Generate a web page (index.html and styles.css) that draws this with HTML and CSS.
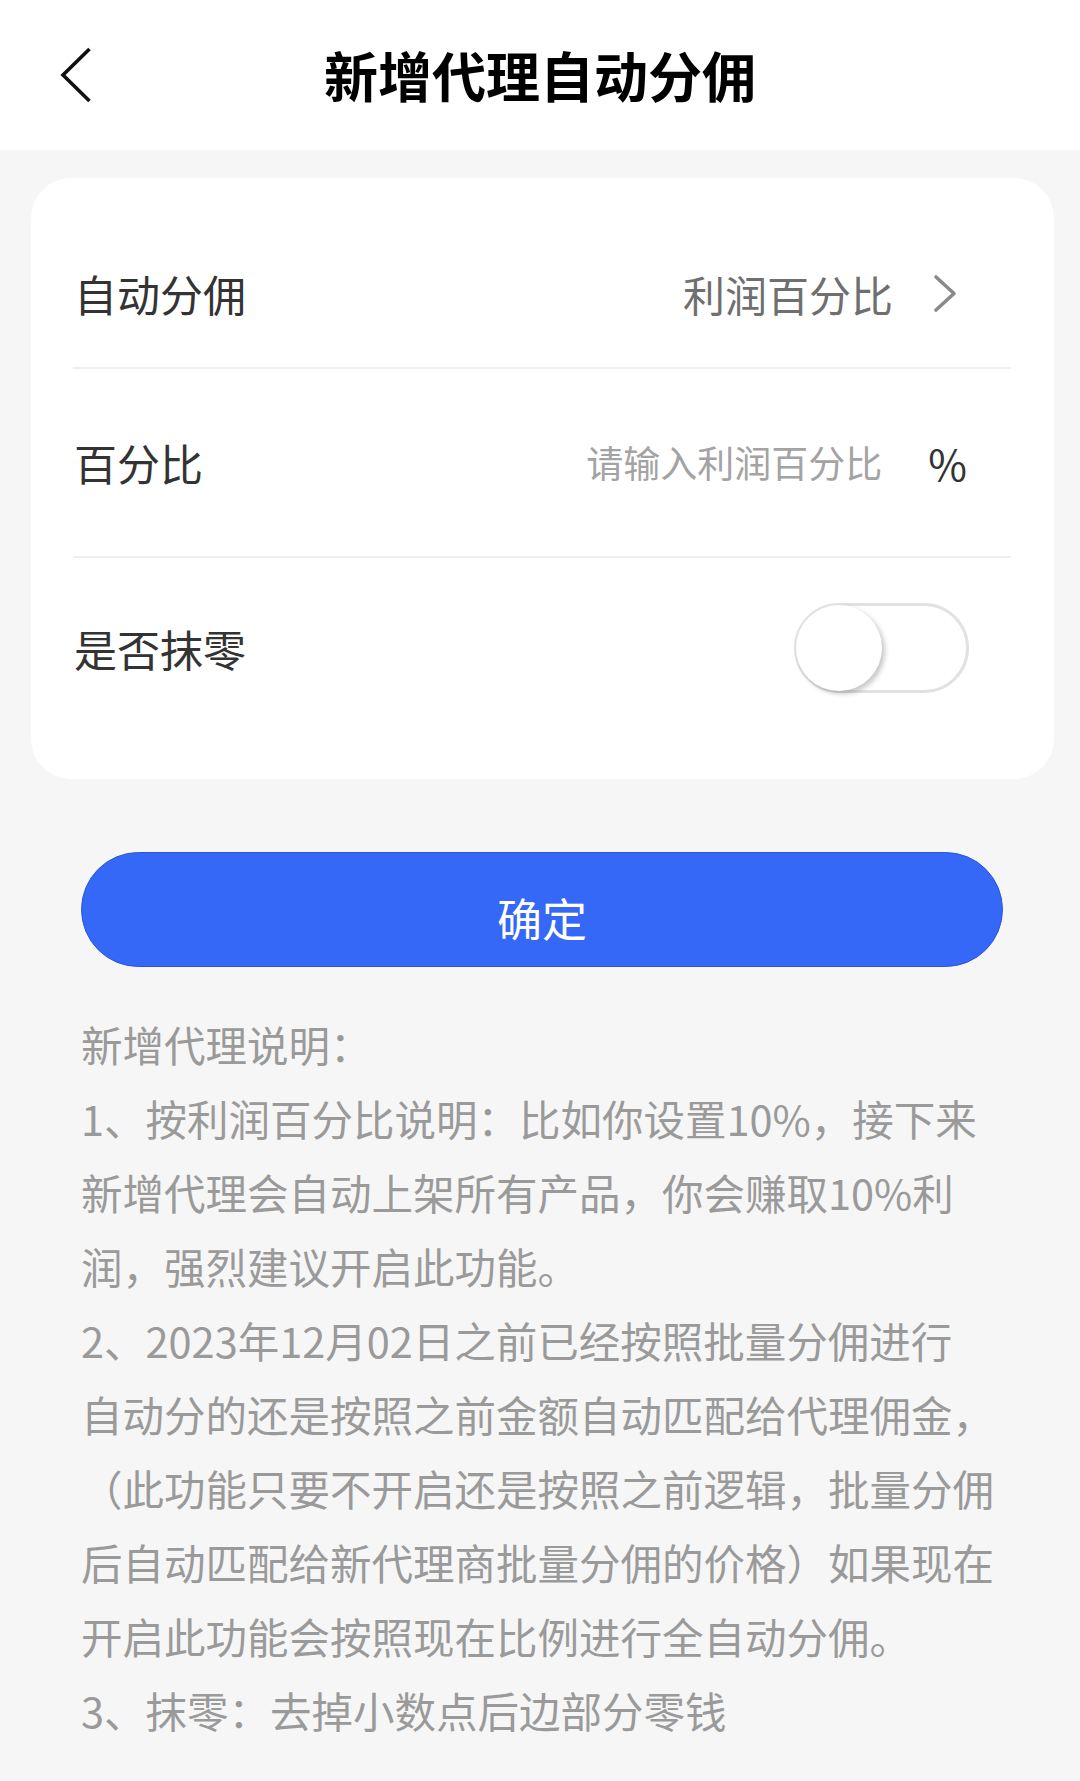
FILE: index.html
```html
<!DOCTYPE html>
<html lang="zh-CN">
<head>
<meta charset="utf-8">
<title>新增代理自动分佣</title>
<link rel="stylesheet" href="styles.css">
</head>
<body>
<div class="page">
  <header class="topbar">
    <div class="topbar-left">
      <svg class="back-icon" width="40" height="60" viewBox="0 0 40 60">
        <polyline points="33.5,4 7,30 33.5,56" fill="none" stroke="#111" stroke-width="3.6" stroke-linejoin="miter"/>
      </svg>
    </div>
    <h1 class="topbar-title">新增代理自动分佣</h1>
    <div class="topbar-right"></div>
  </header>

  <section class="card">
    <div class="row row-first">
      <span class="row-label">自动分佣</span>
      <div class="row-value">
        <span class="value-text">利润百分比</span>
        <svg class="chevron" width="26" height="40" viewBox="0 0 26 40">
          <polyline points="3,3 21,19.5 3,36" fill="none" stroke="#8a8a8a" stroke-width="3.6" stroke-linecap="round" stroke-linejoin="round"/>
        </svg>
      </div>
    </div>
    <div class="row row-second">
      <span class="row-label">百分比</span>
      <div class="row-value">
        <span class="placeholder">请输入利润百分比</span>
        <span class="unit">%</span>
      </div>
    </div>
    <div class="row row-third">
      <span class="row-label">是否抹零</span>
      <div class="switch">
        <span class="switch-knob"></span>
      </div>
    </div>
  </section>

  <button class="confirm-btn">确定</button>

  <div class="notes">
    新增代理说明：<br>
    1、按利润百分比说明：比如你设置10%，接下来<br>
    新增代理会自动上架所有产品，你会赚取10%利<br>
    润，强烈建议开启此功能。<br>
    2、2023年12月02日之前已经按照批量分佣进行<br>
    自动分的还是按照之前金额自动匹配给代理佣金，<br>
    （此功能只要不开启还是按照之前逻辑，批量分佣<br>
    后自动匹配给新代理商批量分佣的价格）如果现在<br>
    开启此功能会按照现在比例进行全自动分佣。<br>
    3、抹零：去掉小数点后边部分零钱
  </div>
</div>
</body>
</html>
```

FILE: styles.css
```css
html, body {
  margin: 0;
  padding: 0;
}

body {
  background: #f6f6f6;
  font-family: "Noto Sans CJK SC", "Noto Sans", sans-serif;
  color: #333;
}

.page {
  width: 1080px;
  min-height: 1781px;
  background: #f6f6f6;
}

.topbar {
  height: 150px;
  background: #ffffff;
  display: grid;
  grid-template-columns: 1fr auto 1fr;
  align-items: center;
}

.topbar-left {
  padding-left: 56px;
  display: flex;
  align-items: center;
}

.back-icon {
  display: block;
}

.topbar-title {
  margin: 0;
  font-size: 54px;
  font-weight: 700;
  color: #000;
  line-height: 1;
  letter-spacing: 0;
}

.card {
  margin: 28px 26px 0 31px;
  background: #ffffff;
  border-radius: 40px;
  padding: 42px 0 41px;
}

.row {
  margin: 0 43px 0 42px;
  display: flex;
  align-items: center;
  justify-content: space-between;
  box-sizing: border-box;
}

.row-first {
  height: 149px;
  border-bottom: 2px solid #efefef;
}

.row-second {
  height: 189px;
  border-bottom: 2px solid #efefef;
}

.row-third {
  height: 180px;
}

.row-label {
  font-size: 43px;
  color: #333;
  line-height: 1;
  margin-left: 1px;
}

.row-value {
  display: flex;
  align-items: center;
}

.value-text {
  font-size: 42px;
  color: #6f6f6f;
  line-height: 1;
}

.chevron {
  display: block;
  margin-left: 40px;
  margin-right: 52px;
}

.placeholder {
  font-size: 37px;
  color: #a3a3a3;
  line-height: 1;
}

.unit {
  font-size: 42px;
  color: #333;
  line-height: 1;
  margin-left: 46px;
  margin-right: 44px;
}

.switch {
  width: 175px;
  height: 90px;
  box-sizing: border-box;
  border: 3px solid #e2e2e2;
  border-radius: 45px;
  background: #fff;
  margin-right: 42px;
  position: relative;
}

.switch-knob {
  position: absolute;
  left: -1px;
  top: -1px;
  width: 86px;
  height: 86px;
  border-radius: 50%;
  background: #fff;
  box-shadow: 3px 3px 5px rgba(0, 0, 0, 0.22);
}

.confirm-btn {
  display: block;
  margin: 73px 0 0 81px;
  width: 922px;
  height: 115px;
  box-sizing: border-box;
  border: 1px solid #2b57d6;
  border-radius: 58px;
  background: #3568f7;
  color: #ffffff;
  font-family: "Noto Sans CJK SC", "Noto Sans", sans-serif;
  font-size: 45px;
  line-height: 1;
  padding: 16px 0 0;
}

.notes {
  margin: 40px 0 0 81px;
  font-size: 41.5px;
  line-height: 74px;
  color: #9a9a9a;
  white-space: nowrap;
}
```
